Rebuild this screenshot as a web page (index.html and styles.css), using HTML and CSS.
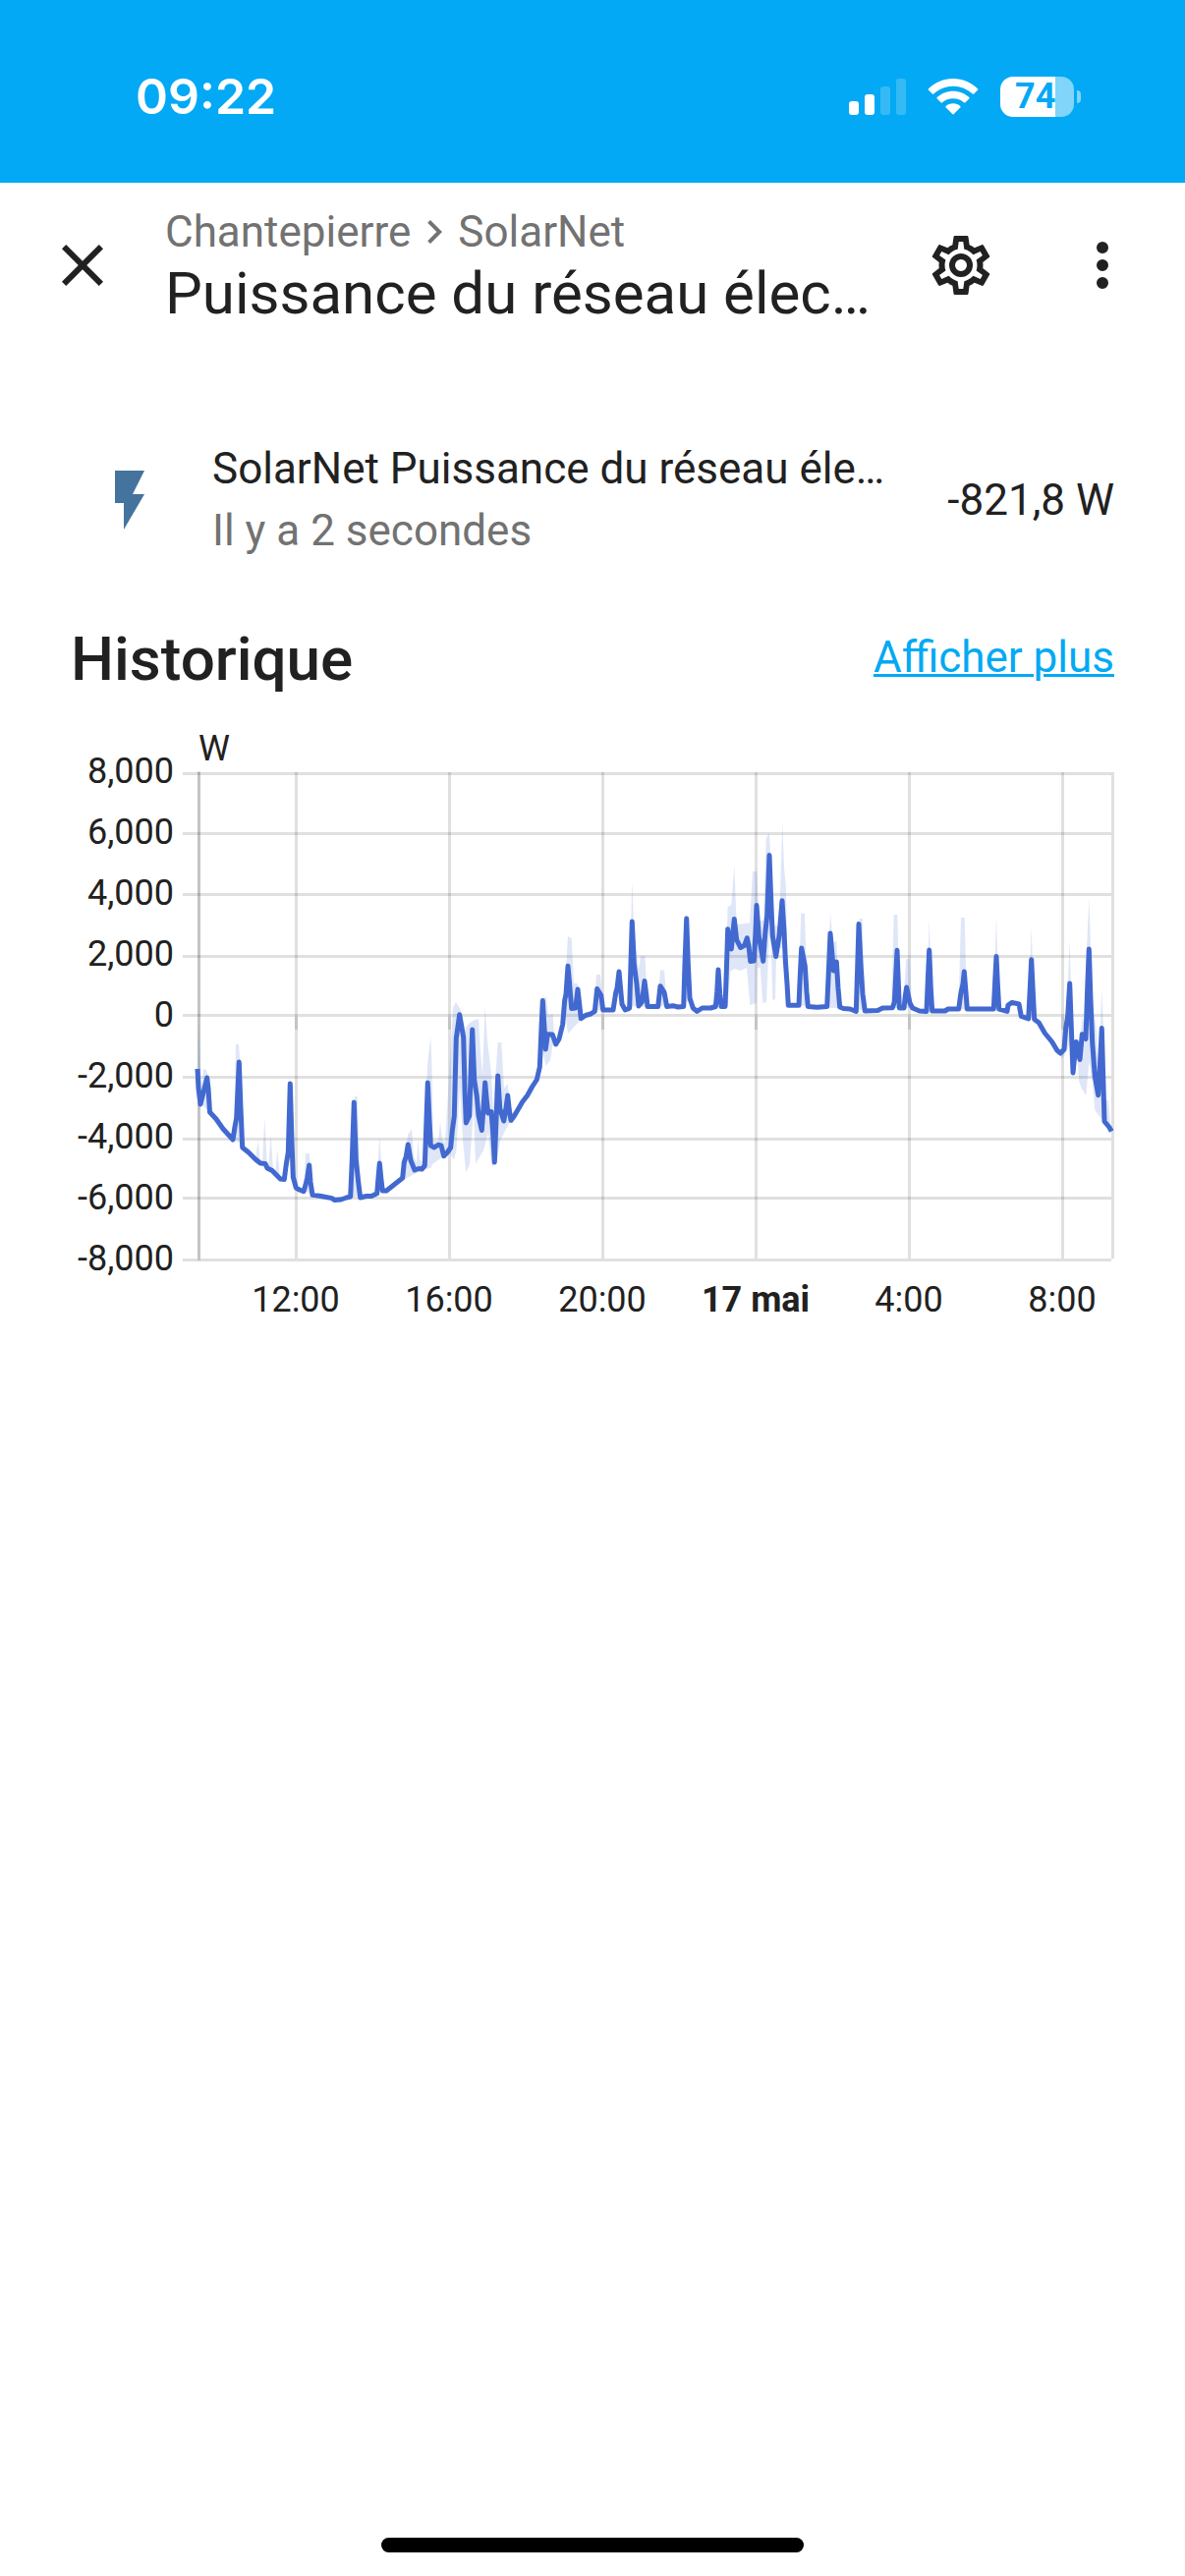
FILE: index.html
```html
<!DOCTYPE html>
<html lang="fr">

<head>
    <meta charset="UTF-8">
    <meta name="viewport" content="width=device-width, initial-scale=1">
    <title>Puissance du réseau électrique</title>
    <link rel="stylesheet" href="styles.css">
</head>

<body>
    <div class="status-bar">
        <span class="time">09:22</span>
        <div class="status-icons">
            <svg class="signal" viewBox="0 0 58 38" aria-hidden="true">
                <rect x="0" y="24" width="10" height="14" rx="3" />
                <rect x="16" y="17" width="10" height="21" rx="3" />
                <rect class="dim" x="32" y="9" width="10" height="29" rx="3" />
                <rect class="dim" x="48" y="1" width="10" height="37" rx="3" />
            </svg>
            <svg class="wifi" viewBox="0 0 52 38" aria-hidden="true">
                <path d="M26 1C35.500 1 44.500 4.800 51 11.200Q51.800 12 51 12.800L47.200 16.500Q46.500 17.200 45.700 16.500C40.300 11.500 33.500 8.700 26 8.700S11.700 11.500 6.300 16.500Q5.500 17.200 4.800 16.500L1 12.800Q.2 12 1 11.200C7.500 4.800 16.500 1 26 1Z" />
                <path d="M26 13.800C32.300 13.800 38 16.200 42.300 20.100Q43 20.900 42.300 21.600L38.500 25.300Q37.700 26 36.900 25.300C34 22.700 30.200 21.300 26 21.300S18 22.700 15.100 25.300Q14.300 26 13.500 25.300L9.700 21.600Q9 20.900 9.700 20.100C14 16.200 19.700 13.800 26 13.800Z" />
                <path d="M26 26.300C28.900 26.300 31.400 27.300 33.300 28.900Q34.100 29.700 33.300 30.500L26.800 37Q26 37.800 25.200 37L18.700 30.500Q17.900 29.700 18.700 28.900C20.600 27.300 23.100 26.300 26 26.300Z" />
            </svg>
            <div class="battery"><span>74</span></div>
        </div>
    </div>

    <header class="toolbar">
        <button class="icon-button" type="button" aria-label="Fermer">
            <svg viewBox="0 0 24 24"><path d="M19,6.410L17.590,5L12,10.590L6.410,5L5,6.410L10.590,12L5,17.590L6.410,19L12,13.410L17.590,19L19,17.590L13.410,12L19,6.410Z" /></svg>
        </button>
        <div class="heading">
            <nav class="breadcrumb">
                <span>Chantepierre</span>
                <svg viewBox="0 0 24 24" aria-hidden="true"><path d="M8.590,16.580L13.170,12L8.590,7.410L10,6L16,12L10,18L8.590,16.580Z" /></svg>
                <span>SolarNet</span>
            </nav>
            <h1>Puissance du réseau élec…</h1>
        </div>
        <button class="icon-button" type="button" aria-label="Paramètres">
            <svg viewBox="0 0 24 24"><path d="M12,8A4,4 0 0,1 16,12A4,4 0 0,1 12,16A4,4 0 0,1 8,12A4,4 0 0,1 12,8M12,10A2,2 0 0,0 10,12A2,2 0 0,0 12,14A2,2 0 0,0 14,12A2,2 0 0,0 12,10M10,22C9.750,22 9.540,21.820 9.500,21.580L9.130,18.930C8.500,18.680 7.960,18.340 7.440,17.940L4.950,18.950C4.730,19.030 4.460,18.950 4.340,18.730L2.340,15.270C2.210,15.050 2.270,14.780 2.460,14.630L4.570,12.970L4.500,12L4.570,11L2.460,9.370C2.270,9.220 2.210,8.950 2.340,8.730L4.340,5.270C4.460,5.050 4.730,4.960 4.950,5.050L7.440,6.050C7.960,5.660 8.500,5.320 9.130,5.070L9.500,2.420C9.540,2.180 9.750,2 10,2H14C14.250,2 14.460,2.180 14.500,2.420L14.870,5.070C15.500,5.320 16.040,5.660 16.560,6.050L19.050,5.050C19.270,4.960 19.540,5.050 19.660,5.270L21.660,8.730C21.790,8.950 21.730,9.220 21.540,9.370L19.430,11L19.500,12L19.430,13L21.540,14.630C21.730,14.780 21.790,15.050 21.660,15.270L19.660,18.730C19.540,18.950 19.270,19.040 19.050,18.950L16.560,17.950C16.040,18.340 15.500,18.680 14.870,18.930L14.500,21.580C14.460,21.820 14.250,22 14,22H10M11.250,4L10.880,6.610C9.680,6.860 8.620,7.500 7.850,8.390L5.440,7.350L4.690,8.650L6.800,10.200C6.400,11.370 6.400,12.640 6.800,13.800L4.680,15.360L5.430,16.660L7.860,15.620C8.630,16.500 9.680,17.140 10.870,17.380L11.240,20H12.760L13.130,17.390C14.320,17.140 15.370,16.500 16.140,15.620L18.570,16.660L19.320,15.360L17.200,13.810C17.600,12.640 17.600,11.370 17.200,10.200L19.310,8.650L18.560,7.350L16.150,8.390C15.380,7.500 14.320,6.860 13.120,6.620L12.750,4H11.250Z" /></svg>
        </button>
        <button class="icon-button" type="button" aria-label="Menu">
            <svg viewBox="0 0 24 24"><path d="M12,16A2,2 0 0,1 14,18A2,2 0 0,1 12,20A2,2 0 0,1 10,18A2,2 0 0,1 12,16M12,10A2,2 0 0,1 14,12A2,2 0 0,1 12,14A2,2 0 0,1 10,12A2,2 0 0,1 12,10M12,4A2,2 0 0,1 14,6A2,2 0 0,1 12,8A2,2 0 0,1 10,6A2,2 0 0,1 12,4Z" /></svg>
        </button>
    </header>

    <main>
        <section class="state">
            <svg class="state-icon" viewBox="0 0 24 24" aria-hidden="true"><path d="M7,2V13H10V22L17,10H13L17,2H7Z" /></svg>
            <div class="info">
                <div class="name">SolarNet Puissance du réseau éle…</div>
                <div class="secondary">Il y a 2 secondes</div>
            </div>
            <div class="value">-821,8 W</div>
        </section>

        <section class="history">
            <div class="history-header">
                <h2>Historique</h2>
                <a href="#">Afficher plus</a>
            </div>

            <svg class="chart" viewBox="72 740 1062 620" role="img" aria-label="Historique de puissance">
                <!-- horizontal grid -->
                <path class="grid" d="M186 787.500H1131M186 848.500H1131M186 910.500H1131M186 973.500H1131M186 1033.500H1131M186 1096.500H1131M186 1159.500H1131M186 1219.500H1131M186 1282.500H1131" />
                <!-- vertical grid -->
                <path class="grid" d="M202.500 786V1281M301.500 786V1281M457.500 786V1281M613.500 786V1281M769.500 786V1281M925.500 786V1281M1081.500 786V1281M1132.500 786V1281" />
                <!-- y axis and ticks under zero -->
                <path class="grid" d="M202.500 785V1283M301.500 1035V1048M457.500 1035V1048M613.500 1035V1048M769.500 1035V1048M925.500 1035V1048M1081.500 1035V1048" />

                <!-- min / max range -->
                <path class="band" d="M201 1088L202 1034L204 1088L206 1105L207 1088L210 1089L212 1096L214 1132L206 1125Z
                    M238 1160L240 1063Q242 1062 243 1064L246 1100L247 1165Z
                    M260 1180L262.700 1161L265 1184ZM267 1184L269.300 1138L272 1189ZM273 1190L275.700 1155L278 1192ZM280 1196L282.300 1170L285 1200Z
                    M309 1212L311 1174H315L318 1216ZM357 1218L361 1116H363.700L367 1218ZM383 1214L386.300 1157L390 1211Z
                    M410 1199L415 1155L419 1149L421 1177L424 1183L425.700 1159L427 1181L431 1182L435 1084L438.300 1055.500L439.300 1079L441 1161H446L448 1142L450 1160L453 1163L457 1095L461 1026L464 1020L469 1028L473 1051Q474 1040 487 1037L489 1071L491 1093L493.700 1024L496 1059L500 1093L502 1128L506.700 1061H510.300L513 1108L516.700 1103L520 1140L513 1153L509 1161L506 1181L501 1188Q499 1180 497 1153L492 1171L484 1184.500L482 1128L478 1185L474.300 1193.500L471 1161L468 1106L464.500 1171L462 1180.500L457 1173L440 1185L439 1188.600L430 1191L422 1195L410 1201Z
                    M550 1080L551 1016L556 1015L558 1034L562.700 1032L564 1055L560 1079L555.700 1085L552 1070Z
                    M573 1042L578 953L581.700 955L584 1001H587.500L590 1010L591 1038L585 1044.500L578 1052L575 1030Z
                    M604 1028L607 992H611L614 1028ZM640 1024L643.300 897L645.300 950L650 987L652 973H656.500L659 1025Z
                    M669 1024L672 987L676 988L679 1024ZM696 1020L698 931L701 933L703 1020Z
                    M737 1024L740.700 923L744.300 921L747.300 881L749.700 941L763 939.600L766 887H770.300L772.500 937H777L779.700 853L783 848L785.700 904L788 942H793L796.300 837L798 883L799.700 900L802 1000L796.700 965L793 965L790 973L789 1017L786.300 1018L785 965L783 950L780 1020L776.300 1021L773.700 985H770.700L769.700 1021L763.300 1023L760 985L754 988L747.300 986L743.300 989L740.700 1024Z
                    M812 1023L815.300 929L819 930L822 1024ZM841 1023L845 929L847.700 959L851.300 958L855 1026H842Z
                    M871 1028L874.700 935H877.700L880 1028ZM907 1026L909.700 931H913.300L915.500 1026ZM919 1026L922.300 976H926.300L928 1026Z
                    M943 1028L945.700 935L948.500 1028ZM975.500 1027L978 934H981.700L984 1027ZM1011 1026L1014 933L1016.700 1026ZM1046.700 1036L1049.700 943L1052.700 1036Z
                    M1080 1078L1085 1046L1088.700 957L1091 1046L1093 1070L1099 1058L1101.700 1034L1104 1047L1106 965L1108.300 914L1110 965L1112 1022L1115.700 1046L1118 1095L1121.300 1006L1123 1047L1124.700 1120H1128L1130 1144L1124 1143L1114.300 1130L1111.700 1100L1108.300 1081L1105.300 1115L1100.700 1108L1098 1100L1096 1070L1090 1060L1083 1075Z" />

                <!-- mean power -->
                <path class="line" d="M201 1088L202 1108L204 1124L207 1112L210.700 1097L212 1108L213.500 1132L220 1139L227 1149L237 1160L239 1147L240.700 1138L243.300 1081L245 1128L246.700 1168L253 1173L260 1180L265 1184L270 1184.500L272 1189L277 1191.500L285.300 1200L289.300 1200.500L291.300 1185L293.300 1173L295.300 1103L297 1161L298.300 1198L301.300 1209L304.700 1211L309 1212.700L311 1206L312.700 1199L314.700 1186L316 1203L318 1216.300L326.700 1217.500L337.700 1219.600L340.700 1221.600L347 1221L352.700 1219L356.700 1218
                    L358.300 1181L360.300 1122L362.300 1181L364.700 1203L366.700 1219L372.700 1217.500H378L383.700 1214.700L385 1199L386.300 1184L388 1201L389.300 1212H393.300L409.700 1199L411.300 1183L413.300 1177L415.300 1165L418 1181L422 1191L426 1189.500L429.300 1190L432.300 1186.500L433.700 1148L435.300 1102L437 1140L438.300 1166L442 1168L446 1165.300L449 1166L451.700 1176.700L455.300 1173L458.700 1168L460.300 1151L462.300 1136L464.300 1057L467.700 1032.700L471.700 1056L473 1108L474.300 1143L477.700 1136L479.300 1087L480.700 1048L482.700 1099L485.300 1116L487 1135.500L490.300 1150.500L492 1128L493.700 1102L495.300 1120L496.700 1133L500 1131.500L501.700 1153L503.300 1183L505 1140L506.700 1095L508.700 1128L512.700 1141L514.700 1130L516.700 1115L518.300 1130L520 1140.400L523.300 1136L531.700 1121.600L536.700 1115L541.700 1106L546.300 1099L549.300 1086
                    L551 1046L552.300 1018.500L554 1046L555.300 1068L557.300 1052.700L562.300 1053L565.700 1063L569 1057.500L572.700 1042.500L574.700 1018L576 1012L578 983.300L580 1006L581.700 1026.500L585.700 1026L588 1007L589.700 1022L591.300 1036.700L596 1033.500L601.300 1032L605.300 1029.400L607.700 1006.500L611.700 1013L613.700 1028H624L626.700 1010.500L628 1006L630 989L633 1022L636.300 1028L639.300 1027L640.700 1026L642 981L643.300 938L645.300 981L648 1001.500L650 1024L653.300 1020L656 998.500L657.700 1012L659 1024.500H669.700L672 1003.700L676 1010L678.700 1024.500L685 1023.700L690 1025L695.700 1024.500L697 981L698.700 935L700.300 981L702 1016L705.300 1026L709.300 1029.400L714.700 1026H723.300L728.300 1024.500L729.700 1010L731 987L732.700 1012L734 1024.500H738
                    L739.300 989L740.700 945.700L742.300 960L744.300 966L747.300 935.500L749.700 956.700L753.700 964.500L757.700 962.400L760.300 954.700L762 963L763.700 978.400L767.300 978L769 948L770 921.600L772.300 952.700L776.700 978.400L778.700 950.600L780.700 932L783 870.600L785 924L786.300 952.700L789.700 973.500L793 952.700L796 916.700L798 948L799.300 977L801 1001L802.300 1023.300H813L814.300 993L815.700 965L819.300 983.300L821 1010L822.300 1024.500L831.700 1025.300L841.700 1024.500L843.300 989L845 950L846.700 969L848.300 988L851.300 979L853 1006L854.700 1025L858.300 1026.500L865 1027L871.300 1029.400L872.700 985L874 940.500L876 981L878 1012L880.300 1029L893.300 1028.500L898.300 1026L908.300 1025.700L910.300 1020L913 967.300
                    L915.300 1026H920L921.300 1014L922.700 1005L926 1021L928.700 1026L935.700 1029L943 1029.400L944.300 998L945.700 967L947.300 1006L948.700 1029H961.700L965 1027H975.700L978 1010L980 1001.500L981.300 989L983 1010L984.300 1027H1011.300L1012.700 998L1014 973.500L1015.300 1001L1016.700 1027L1025 1029.400L1026 1023L1030 1020.400L1037 1022L1039.300 1034.300L1046.700 1037L1048.300 1006L1049.700 976.700L1051.300 1010L1052.700 1037.500L1057.300 1041L1063.300 1051.500L1070.700 1060.500L1075.700 1069L1079.300 1072L1083 1068L1084.700 1046.500L1086.700 1034L1088.700 1001L1090.300 1046L1092 1092L1093.700 1075L1095.300 1060.500L1099 1078.500L1101.300 1052.700L1105 1057.500L1106.700 1006L1108.300 966L1110 1018L1111.700 1061L1114.300 1095.500L1117.700 1114.700L1119.300 1087L1121.300 1046.500L1122.700 1095.500L1124 1141.500L1128.700 1147L1131.300 1151.500" />

                <g class="labels">
                    <text x="202" y="774">W</text>
                    <g text-anchor="end">
                        <text x="177" y="797">8,000</text>
                        <text x="177" y="859">6,000</text>
                        <text x="177" y="921">4,000</text>
                        <text x="177" y="983">2,000</text>
                        <text x="177" y="1045">0</text>
                        <text x="177" y="1107">-2,000</text>
                        <text x="177" y="1169">-4,000</text>
                        <text x="177" y="1231">-6,000</text>
                        <text x="177" y="1293">-8,000</text>
                    </g>
                    <g text-anchor="middle">
                        <text x="301" y="1335">12:00</text>
                        <text x="457" y="1335">16:00</text>
                        <text x="613" y="1335">20:00</text>
                        <text class="day" x="769" y="1335">17 mai</text>
                        <text x="925" y="1335">4:00</text>
                        <text x="1081" y="1335">8:00</text>
                    </g>
                </g>
            </svg>
        </section>
    </main>

    <div class="home-indicator"></div>
</body>

</html>
```

FILE: styles.css
```css
* {
    box-sizing: border-box;
}

body {
    margin: 0;
    min-height: 100vh;
    display: flex;
    flex-direction: column;
    background: #fff;
    color: #212121;
    font-family: Roboto, "Liberation Sans", sans-serif;
    font-size: 44px;
}

h1,
h2 {
    margin: 0;
}

.status-bar {
    display: flex;
    justify-content: space-between;
    align-items: center;
    padding: 66px 106px 56px 138px;
    background: #03a9f4;
    color: #fff;
}

.time {
    font-family: Inter, sans-serif;
    font-size: 50px;
    font-weight: 600;
    line-height: 64px;
}

.status-icons {
    display: flex;
    align-items: center;
    gap: 22px;
}

.status-icons svg {
    height: 38px;
    fill: #fff;
}

.signal {
    width: 58px;
}

.signal .dim {
    opacity: 0.2;
}

.wifi {
    width: 52px;
}

.battery {
    position: relative;
    width: 75px;
    height: 41px;
    margin-right: 7px;
    padding-left: 15px;
    border-radius: 13px;
    background: linear-gradient(to right, #fff 75%, #81d4fa 75%);
    color: #03a9f4;
    font-size: 36px;
    font-weight: 700;
    line-height: 41px;
}

/* battery tip */
.battery::after {
    content: "";
    position: absolute;
    left: 78px;
    top: 14px;
    width: 4px;
    height: 13px;
    border-radius: 0 4px 4px 0;
    background: #81d4fa;
}

.toolbar {
    display: flex;
    align-items: center;
    height: 168px;
    padding: 0 12px;
}

.icon-button {
    flex: none;
    width: 144px;
    height: 144px;
    padding: 36px;
    border: 0;
    background: none;
}

.icon-button svg {
    display: block;
    width: 72px;
    height: 72px;
    fill: #212121;
}

.heading {
    flex: 1;
    min-width: 0;
    padding: 4px 12px 0;
}

.breadcrumb {
    display: flex;
    align-items: center;
    color: #727272;
    line-height: 54px;
}

.breadcrumb svg {
    width: 48px;
    height: 48px;
    fill: #727272;
}

h1 {
    overflow: hidden;
    text-overflow: ellipsis;
    white-space: nowrap;
    font-size: 60px;
    font-weight: 400;
    line-height: 72px;
}

main {
    padding: 72px;
}

.state {
    display: flex;
    align-items: center;
    gap: 48px;
    height: 166px;
    padding-left: 24px;
}

.state-icon {
    flex: none;
    width: 72px;
    height: 72px;
    fill: #44739e;
}

.info {
    flex: 1;
    min-width: 0;
    line-height: 63px;
}

.name {
    overflow: hidden;
    text-overflow: ellipsis;
    white-space: nowrap;
}

.secondary {
    color: #727272;
}

.value {
    white-space: nowrap;
}

.history-header {
    display: flex;
    justify-content: space-between;
    align-items: flex-start;
    padding-top: 38px;
}

h2 {
    font-size: 62px;
    font-weight: 500;
    line-height: 82px;
}

.history-header a {
    color: #03a9f4;
    line-height: 78px;
    text-decoration-thickness: 3px;
}

.chart {
    display: block;
    width: 100%;
    margin-top: 28px;
}

.grid {
    fill: none;
    stroke: rgba(0, 0, 0, 0.12);
    stroke-width: 3;
}

.band {
    fill: #4269d0;
    fill-opacity: 0.17;
}

.line {
    fill: none;
    stroke: #4269d0;
    stroke-width: 5;
    stroke-linejoin: round;
}

.labels {
    fill: #212121;
    font-size: 36px;
}

.labels .day {
    font-weight: 700;
}

.home-indicator {
    width: 430px;
    height: 15px;
    margin: auto auto 24px;
    border-radius: 8px;
    background: #000;
}
```
